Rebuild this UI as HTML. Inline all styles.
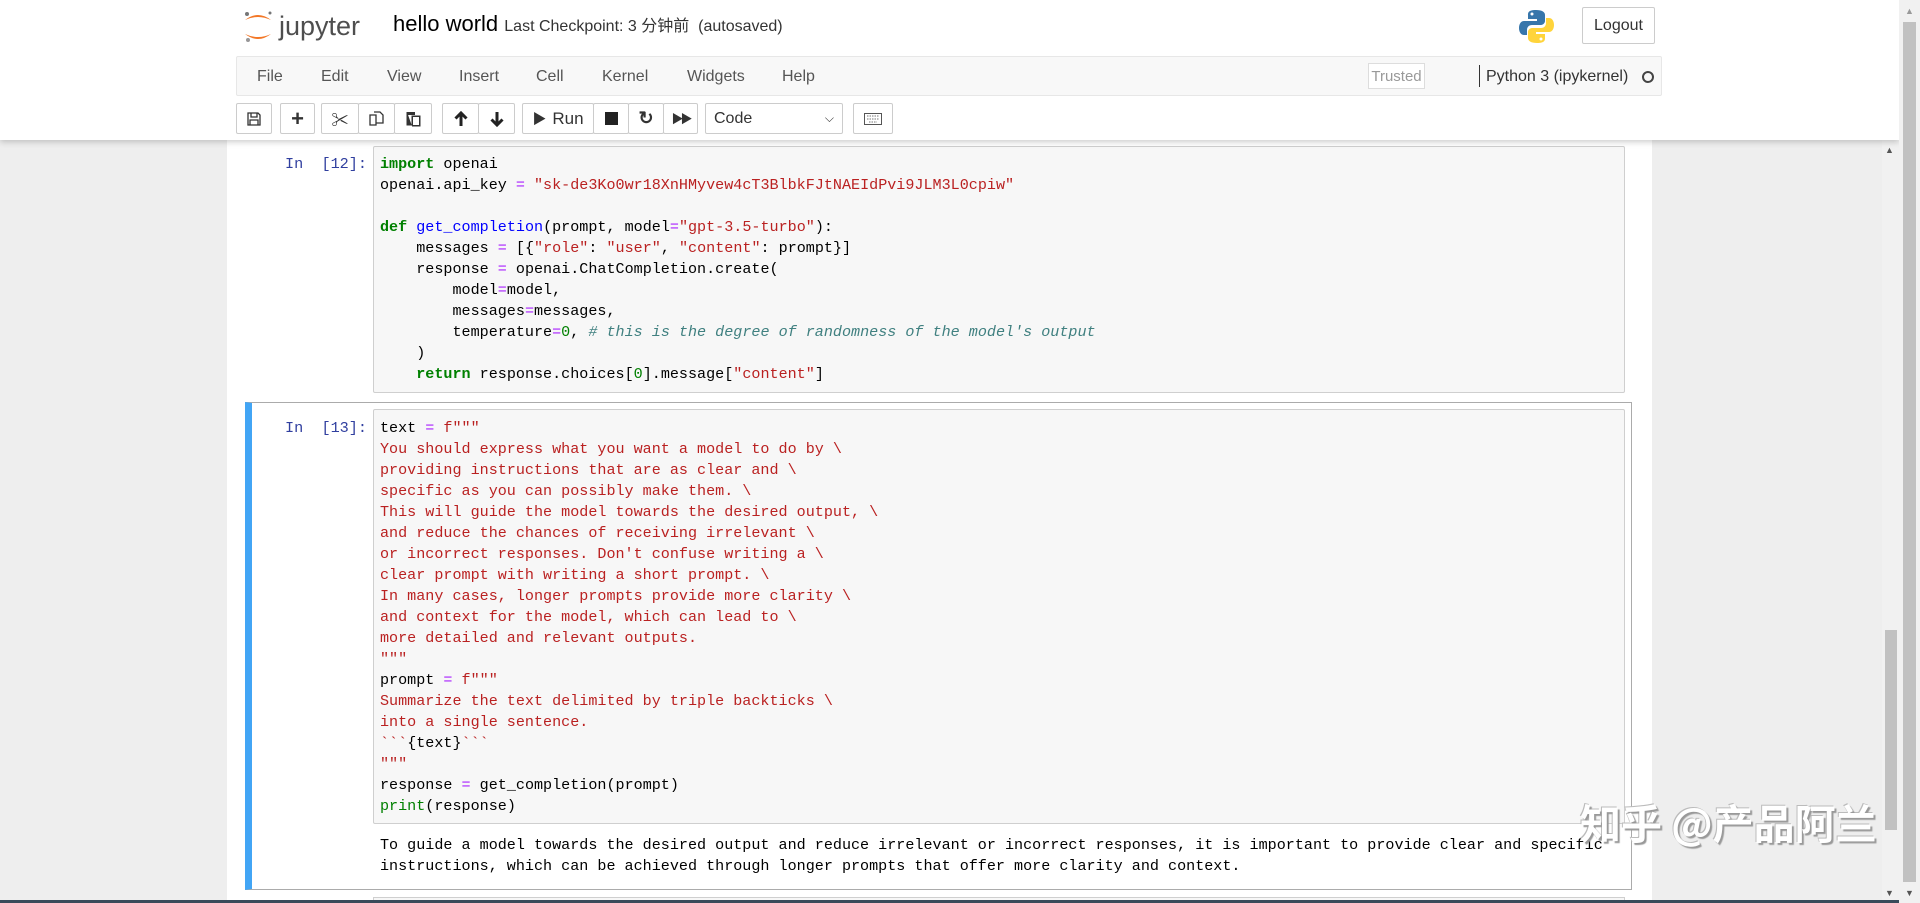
<!DOCTYPE html>
<html><head><meta charset="utf-8">
<style>
*{margin:0;padding:0;box-sizing:border-box}
body{width:1920px;height:903px;overflow:hidden;background:#eeeeee;font-family:"Liberation Sans","Noto Sans CJK SC",sans-serif;position:relative}
.abs{position:absolute}
#hdr{left:0;top:0;width:1899px;height:140px;background:#fff;box-shadow:0 2px 6px rgba(0,0,0,.2);z-index:2}
.menu{left:236px;top:56px;width:1426px;height:40px;background:#f8f8f8;border:1px solid #e7e7e7;border-radius:2px}
.mi{position:absolute;top:11px;font-size:16px;color:#555}
.btn{position:absolute;top:103px;height:31px;background:#fff;border:1px solid #ccc;border-radius:2px;display:flex;align-items:center;justify-content:center;color:#333;font-size:16px}
.code{font-family:"Liberation Mono","Noto Sans CJK SC",monospace;font-size:15.1px;line-height:21px;white-space:pre;color:#000}
.k{color:#008000;font-weight:bold}.s{color:#BA2121}.f{color:#0000FF}.o{color:#AA22FF}.n{color:#008000}.c{color:#408080;font-style:italic}.b{color:#008000}
.prompt{font-family:"Liberation Mono",monospace;font-size:15.2px;color:#303F9F;line-height:21px;white-space:pre}
.inp{background:#f7f7f7;border:1px solid #cfcfcf;border-radius:2px}
</style></head><body>
<div id="hdr" class="abs">
  <svg class="abs" style="left:241px;top:9px" width="140" height="36" viewBox="0 0 140 36">
    <path d="M4 11 Q17 1 30 11 Q17 5 4 11Z" fill="#F37726"/>
    <path d="M4 25 Q17 35 30 25 Q17 31 4 25Z" fill="#F37726"/>
    <circle cx="6" cy="5" r="2" fill="#767677"/><circle cx="29" cy="4" r="1.5" fill="#767677"/><circle cx="7" cy="31" r="2" fill="#989798"/>
    <text x="38" y="26" font-family="Liberation Sans" font-size="27" fill="#4e4e4e">jupyter</text>
  </svg>
  <div class="abs" style="left:393px;top:11px;font-size:22px;color:#000">hello world <span style="font-size:16px;color:#333">Last Checkpoint: 3 分钟前 &nbsp;(autosaved)</span></div>
  <svg class="abs" style="left:1518px;top:8px" width="37" height="37" viewBox="0 0 37 37">
    <path d="M18 2c-8 0-8 3-8 5v4h9v2H6c-3 0-5 3-5 7s2 7 5 7h3v-5c0-3 2-5 5-5h9c2 0 4-2 4-4V7c0-3-3-5-9-5z" fill="#3776AB"/>
    <path d="M19 35c8 0 8-3 8-5v-4h-9v-2h13c3 0 5-3 5-7s-2-7-5-7h-3v5c0 3-2 5-5 5h-9c-2 0-4 2-4 4v6c0 3 3 5 9 5z" fill="#FFD43B"/>
    <circle cx="14" cy="6" r="1.5" fill="#fff"/><circle cx="23" cy="31" r="1.5" fill="#fff"/>
  </svg>
  <div class="abs" style="left:1582px;top:7px;width:73px;height:37px;border:1px solid #ccc;border-radius:2px;font-size:16px;color:#333;display:flex;align-items:center;justify-content:center">Logout</div>
  <div class="abs menu">
    <span class="mi" style="left:20px">File</span><span class="mi" style="left:84px">Edit</span><span class="mi" style="left:150px">View</span><span class="mi" style="left:222px">Insert</span><span class="mi" style="left:299px">Cell</span><span class="mi" style="left:365px">Kernel</span><span class="mi" style="left:450px">Widgets</span><span class="mi" style="left:545px">Help</span>
    <div class="abs" style="left:1131px;top:6px;width:57px;height:26px;border:1px solid #ddd;background:#fff;color:#999;font-size:15px;display:flex;align-items:center;justify-content:center">Trusted</div>
    <div class="abs" style="left:1242px;top:8px;width:1px;height:22px;background:#333"></div>
    <span class="mi" style="left:1249px;color:#333">Python 3 (ipykernel)</span>
    <div class="abs" style="left:1405px;top:14px;width:12px;height:12px;border:2px solid #444;border-radius:50%"></div>
  </div>
  <div class="btn" style="left:236px;width:36px"><svg width="14" height="14" viewBox="0 0 14 14"><path d="M1 1h10l2 2v10H1z M4 1v4h6V1 M3 8h8v5H3z" fill="none" stroke="#333" stroke-width="1.3"/></svg></div>
  <div class="btn" style="left:280px;width:35px;font-weight:bold;font-size:22px">+</div>
  <div class="btn" style="left:321px;width:38px;font-size:17px">✂</div>
  <div class="btn" style="left:358px;width:37px"><svg width="15" height="16" viewBox="0 0 15 16"><path d="M1 4h6v10H1z M5 1h6l3 3v8H7" fill="none" stroke="#333" stroke-width="1.3"/></svg></div>
  <div class="btn" style="left:394px;width:38px"><svg width="15" height="16" viewBox="0 0 15 16"><path d="M1 1h8v3H1z" fill="#333"/><path d="M1 1v13h5V5h8v10H6" fill="#333" stroke="#333"/><rect x="7" y="6" width="6" height="8" fill="#fff"/></svg></div>
  <div class="btn" style="left:442px;width:37px"><svg width="14" height="16" viewBox="0 0 14 16"><path d="M7 2v13M1.5 7.5L7 2l5.5 5.5" fill="none" stroke="#222" stroke-width="3"/></svg></div>
  <div class="btn" style="left:478px;width:37px"><svg width="14" height="16" viewBox="0 0 14 16"><path d="M7 1v13M1.5 8.5L7 14l5.5-5.5" fill="none" stroke="#222" stroke-width="3"/></svg></div>
  <div class="btn" style="left:522px;width:72px;font-size:17px"><span style="font-size:14px;margin-right:6px">▶</span>Run</div>
  <div class="btn" style="left:593px;width:36px"><div style="width:13px;height:13px;background:#222"></div></div>
  <div class="btn" style="left:628px;width:36px;font-weight:bold;font-size:18px">↻</div>
  <div class="btn" style="left:663px;width:35px;font-size:12px;letter-spacing:-3px">▶▶</div>
  <div class="btn" style="left:705px;width:138px;justify-content:space-between;padding:0 8px;font-size:16px"><span>Code</span><span style="font-size:12px">⌵</span></div>
  <div class="btn" style="left:853px;width:40px"><svg width="18" height="12" viewBox="0 0 18 12"><rect x="0.5" y="0.5" width="17" height="11" fill="none" stroke="#555"/><path d="M3 3h12M3 6h12M5 9h8" stroke="#777" stroke-dasharray="1.5 1"/></svg></div>
</div>
<div class="abs" style="left:227px;top:140px;width:1425px;height:763px;background:#fff"></div>
<!-- cell 1 -->
<div class="abs prompt" style="left:285px;top:154px">In  [12]:</div>
<div class="abs inp" style="left:373px;top:146px;width:1252px;height:247px"></div>
<div class="abs code" style="left:380px;top:154px"><span class="k">import</span> openai
openai.api_key <span class="o">=</span> <span class="s">"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"</span>

<span class="k">def</span> <span class="f">get_completion</span>(prompt, model<span class="o">=</span><span class="s">"gpt-3.5-turbo"</span>):
    messages <span class="o">=</span> [{<span class="s">"role"</span>: <span class="s">"user"</span>, <span class="s">"content"</span>: prompt}]
    response <span class="o">=</span> openai.ChatCompletion.create(
        model<span class="o">=</span>model,
        messages<span class="o">=</span>messages,
        temperature<span class="o">=</span><span class="n">0</span>, <span class="c"># this is the degree of randomness of the model's output</span>
    )
    <span class="k">return</span> response.choices[<span class="n">0</span>].message[<span class="s">"content"</span>]</div>
<!-- cell 2 -->
<div class="abs" style="left:245px;top:402px;width:1387px;height:488px;border:1px solid #ababab;border-left:7px solid #42A5F5"></div>
<div class="abs prompt" style="left:285px;top:418px">In  [13]:</div>
<div class="abs inp" style="left:373px;top:409px;width:1252px;height:415px"></div>
<div class="abs code" style="left:380px;top:418px">text <span class="o">=</span> <span class="s">f"""</span>
<span class="s">You should express what you want a model to do by \
providing instructions that are as clear and \
specific as you can possibly make them. \
This will guide the model towards the desired output, \
and reduce the chances of receiving irrelevant \
or incorrect responses. Don't confuse writing a \
clear prompt with writing a short prompt. \
In many cases, longer prompts provide more clarity \
and context for the model, which can lead to \
more detailed and relevant outputs.
"""</span>
prompt <span class="o">=</span> <span class="s">f"""</span>
<span class="s">Summarize the text delimited by triple backticks \
into a single sentence.
&#96;&#96;&#96;</span>{text}<span class="s">&#96;&#96;&#96;
"""</span>
response <span class="o">=</span> get_completion(prompt)
<span class="b">print</span>(response)</div>
<div class="abs code" style="left:380px;top:835px;color:#000">To guide a model towards the desired output and reduce irrelevant or incorrect responses, it is important to provide clear and specific
instructions, which can be achieved through longer prompts that offer more clarity and context.</div>
<div class="abs" style="left:373px;top:897px;width:1252px;height:6px;border:1px solid #cfcfcf;background:#f7f7f7"></div>
<!-- inner scrollbar -->
<div class="abs" style="left:1882px;top:140px;width:17px;height:763px;background:#f1f1f1"></div>
<div class="abs" style="left:1885px;top:145px;font-size:9px;color:#555">▲</div>
<div class="abs" style="left:1885px;top:630px;width:12px;height:200px;background:#c1c1c1"></div>
<div class="abs" style="left:1885px;top:888px;font-size:9px;color:#555">▼</div>
<!-- window scrollbar -->
<div class="abs" style="left:1899px;top:0;width:21px;height:903px;background:#f1f1f1;z-index:3"></div>
<div class="abs" style="left:1903px;top:22px;width:13px;height:860px;background:#c1c1c1;z-index:3"></div>
<div class="abs" style="left:1905px;top:6px;font-size:9px;color:#999;z-index:3">▲</div>
<div class="abs" style="left:1905px;top:888px;font-size:9px;color:#555;z-index:3">▼</div>
<div class="abs" style="left:0;top:900px;width:1899px;height:3px;background:#3a4a5a"></div>
<!-- watermark -->
<div class="abs" style="left:1580px;top:794px;font-size:41px;font-weight:bold;color:#fff;font-family:'Noto Sans CJK SC',sans-serif;text-shadow:2px 2px 1px #999,-1px -1px 0 #bbb;white-space:nowrap;line-height:54px;z-index:5">知乎 @产品阿兰</div>
</body></html>
